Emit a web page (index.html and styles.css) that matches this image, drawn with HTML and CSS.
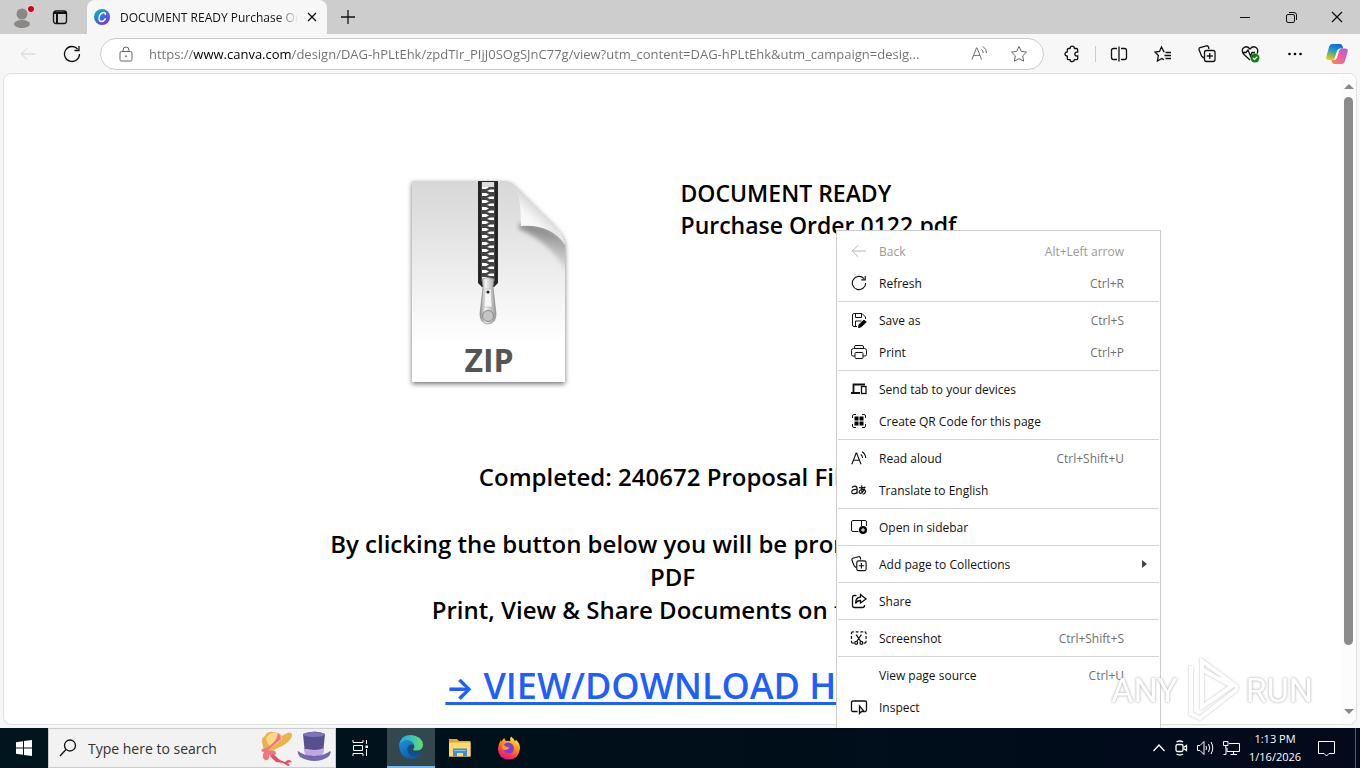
FILE: index.html
```
<!DOCTYPE html>
<html lang="en">

<head>
  <meta charset="UTF-8">
  <meta name="viewport" content="width=device-width, initial-scale=1.0">
  <title>DOCUMENT READY Purchase Order 0122.pdf</title>
  <link rel="stylesheet" href="styles.css">
</head>

<body>
  <svg class="sprite" aria-hidden="true">
    <symbol id="i-back" viewBox="0 0 18 18"><path d="M17 9H1.5M8 2.5 1.5 9 8 15.5" /></symbol>
    <symbol id="i-refresh" viewBox="0 0 18 18"><path d="M16.5 9A7.5 7.5 0 1 1 14.6 4M16 1v4.5h-4.5" /></symbol>
    <symbol id="i-aloud" viewBox="0 0 18 18"><path d="M1 15.5 5.800 3h.6l4.800 12.500M2.700 11h6.800M11 4.500q2 1.500 2 4M12.500 1.500q4 2.500 4 7" /></symbol>
    <symbol id="i-collect" viewBox="0 0 18 18"><path d="M6 12.500H5L3.500 11 1 4.500Q.8 3 2 2.500L8.500.8Q10 .6 10.500 2l.5 2" /><rect x="6.500" y="5.500" width="10.500" height="11" rx="2" /><path d="M11.750 8v6M8.750 11h6" /></symbol>
  </svg>

  <div class="window">
    <header class="tab-strip">
      <button class="icon-btn profile" aria-label="Profile">
        <svg width="28" height="28" viewBox="0 0 28 28">
          <circle cx="13" cy="11" r="5.500" fill="#8a8886" />
          <ellipse cx="13" cy="21" rx="8" ry="4" fill="#8a8886" />
          <circle cx="22" cy="6" r="4" fill="#f1d0d2" />
          <circle cx="22" cy="6" r="3" fill="#d0021b" />
        </svg>
      </button>
      <button class="icon-btn workspaces" aria-label="Tab actions">
        <svg class="line bold" width="16" height="16" viewBox="0 0 16 16"><rect x="1.500" y="2" width="13" height="12.500" rx="2.500" /><path d="M2 4h12M5 4v10" stroke-width="2" /></svg>
      </button>
      <div class="tab">
        <svg width="18" height="18" viewBox="0 0 18 18">
          <defs>
            <linearGradient id="canva" x1="0" y1="0" x2=".7" y2="1">
              <stop offset="0" stop-color="#00c4cc" /><stop offset=".5" stop-color="#2f7be0" /><stop offset="1" stop-color="#7d2ae8" />
            </linearGradient>
          </defs>
          <circle cx="9" cy="9" r="8" fill="url(#canva)" />
          <path d="M12.500 6.500C12.500 3.500 8.500 4 6.800 7.200 5 10.800 6.300 13.500 8.500 13.500q2.300 0 3.800-2.700" fill="none" stroke="#fff" stroke-width="1.500" stroke-linecap="round" />
        </svg>
        <span class="tab-title">DOCUMENT READY Purchase Order 0122.pdf</span>
        <button class="icon-btn tab-close" aria-label="Close tab">
          <svg class="line bold" width="10" height="10" viewBox="0 0 10 10"><path d="m1 1 8 8M9 1 1 9" /></svg>
        </button>
      </div>
      <button class="icon-btn new-tab" aria-label="New tab">
        <svg class="line bold" width="14" height="14" viewBox="0 0 14 14"><path d="M7 0v14M0 7h14" /></svg>
      </button>
      <div class="window-buttons">
        <button class="icon-btn" aria-label="Minimize"><svg class="line" width="10" height="10" viewBox="0 0 10 10"><path d="M0 5.500h10" /></svg></button>
        <button class="icon-btn" aria-label="Restore"><svg class="line" width="11" height="11" viewBox="0 0 11 11"><rect x=".5" y="2.500" width="8" height="8" rx="1.500" /><path d="M3 .5h5q2.500 0 2.500 2.500v5" /></svg></button>
        <button class="icon-btn" aria-label="Close"><svg class="line bold" width="12" height="12" viewBox="0 0 12 12"><path d="m1 1 10 10M11 1 1 11" /></svg></button>
      </div>
    </header>

    <nav class="toolbar">
      <button class="icon-btn nav-btn" aria-label="Back" disabled><svg class="line" width="16" height="16"><use href="#i-back" /></svg></button>
      <button class="icon-btn nav-btn" aria-label="Refresh"><svg class="line bold" width="18" height="18"><use href="#i-refresh" /></svg></button>
      <div class="address">
        <svg class="line gray" width="14" height="16" viewBox="0 0 14 16"><rect x="1" y="5.500" width="12" height="9.500" rx="1.500" /><path d="M4 5.500V4q0-3 3-3t3 3v1.500" /><circle cx="7" cy="10.200" r=".6" /></svg>
        <input class="url" type="text" aria-label="Address" value="https://www.canva.com/design/DAG-hPLtEhk/zpdTIr_PIjJ0SOgSJnC77g/view?utm_content=DAG-hPLtEhk&amp;utm_campaign=desig...">
        <button class="icon-btn" aria-label="Read aloud"><svg class="line gray" width="17" height="17"><use href="#i-aloud" /></svg></button>
        <button class="icon-btn" aria-label="Add to favorites"><svg class="line gray" width="18" height="18" viewBox="0 0 18 18"><path d="m9 1.500 2.300 4.900 5.200.7-3.800 3.700.9 5.400L9 13.600l-4.600 2.600.9-5.400L1.500 7.100l5.200-.7z" /></svg></button>
      </div>
      <div class="tools">
        <button class="icon-btn" aria-label="Extensions"><svg class="line bold" width="18" height="18" viewBox="0 0 18 18"><path d="M5.500 3.500H7q.2-2.300 2.200-2.300T11.500 3.500h2q1.200 0 1.200 1.200v2.500h-1q-1.900 0-1.900 1.900t1.900 1.900h1v2.500q0 1.200-1.200 1.200h-2q-.3 2-2.300 2T7 14.700H5.500q-1.200 0-1.200-1.200v-2.300q-2.300-.2-2.300-2.100t2.300-2.200V4.700q0-1.200 1.200-1.200z" /></svg></button>
        <span class="tool-line"></span>
        <button class="icon-btn" aria-label="Split screen"><svg class="line bold" width="18" height="18" viewBox="0 0 18 18"><path d="M9 1.500v15M7 3.500H3.500q-2 0-2 2v7q0 2 2 2H7M11 3.500h3.500q2 0 2 2v7q0 2-2 2H11" /></svg></button>
        <button class="icon-btn" aria-label="Favorites"><svg class="line bold" width="18" height="18" viewBox="0 0 18 18"><path d="M10.500 6.500H9.800L7.500 2 5.500 6.500 1 7l3.400 3.500-1 5.500 4.500-2.500 2 1.200M11.500 7.500H17M10.500 10.500H17M11.500 13.500H17" /></svg></button>
        <button class="icon-btn" aria-label="Collections"><svg class="line bold" width="18" height="18"><use href="#i-collect" /></svg></button>
        <button class="icon-btn" aria-label="Browser essentials"><svg class="line bold" width="20" height="18" viewBox="0 0 20 18"><path d="M9 15 3 9.500Q-.5 5 3 2.500 6 .5 9 4q3-3.500 6-1.500 3 2.500 1 6M1 7.500h4l2-2.500 2.500 6L11 7.500h3" /><circle cx="14" cy="13" r="4.500" fill="#107c10" stroke="none" /><path d="m12 13 1.500 1.500 2.700-2.700" stroke="#fff" /></svg></button>
        <button class="icon-btn" aria-label="Settings and more"><svg width="18" height="18" viewBox="0 0 18 18"><circle cx="3.500" cy="9" r="1.300" /><circle cx="9" cy="9" r="1.300" /><circle cx="14.500" cy="9" r="1.300" /></svg></button>
        <button class="icon-btn" aria-label="Copilot">
          <svg width="24" height="24" viewBox="0 0 24 24">
            <defs>
              <linearGradient id="cp1" x1=".6" y1="0" x2=".3" y2="1"><stop offset="0" stop-color="#1569d6" /><stop offset=".4" stop-color="#1f9ad0" /><stop offset=".7" stop-color="#7dbb55" /><stop offset="1" stop-color="#f2c11e" /></linearGradient>
              <linearGradient id="cp2" x1="1" y1="0" x2="0" y2="1"><stop offset="0" stop-color="#a45be8" /><stop offset=".5" stop-color="#f0609c" /><stop offset="1" stop-color="#ff8a45" /></linearGradient>
            </defs>
            <path d="M7 2h8q2 0 2.500 2l.8 2.500h-3q-2.300 0-3 2.300L10 15.500Q9.200 18 7 18H3.500Q.7 18 1.400 14.500L4 5q.8-3 3-3z" fill="url(#cp1)" />
            <path d="M17 22H9.500q-2 0-2.500-2l-.8-2H9q2.300 0 3-2.300L14 9q.8-2.500 3-2.500h3.500q2.800 0 2.100 3.500L20 19q-.8 3-3 3z" fill="url(#cp2)" />
            <path d="m12 9 2.500-2.500-2.700 9L9.500 17.500z" fill="#fff" />
          </svg>
        </button>
      </div>
    </nav>

    <div class="viewport">
      <main class="design">
        <section class="hero">
          <svg class="zip" width="180" height="230" viewBox="0 0 180 230" role="img" aria-label="ZIP archive">
            <defs>
              <linearGradient id="paper" x1="0" y1="0" x2="0" y2="1"><stop offset="0" stop-color="#d7d7d7" /><stop offset=".4" stop-color="#eaeaea" /><stop offset=".8" stop-color="#fff" /></linearGradient>
              <linearGradient id="curl" x1=".2" y1=".9" x2=".7" y2=".3"><stop offset="0" stop-color="#fff" /><stop offset=".5" stop-color="#f6f6f6" /><stop offset="1" stop-color="#bdbdbd" /></linearGradient>
              <linearGradient id="pull" x1="0" y1="0" x2="1" y2="0"><stop offset="0" stop-color="#8d8d8d" /><stop offset=".35" stop-color="#f4f4f4" /><stop offset="1" stop-color="#999" /></linearGradient>
              <linearGradient id="fold" x1=".6" y1="0" x2=".4" y2="1"><stop offset="0" stop-color="#777" /><stop offset="1" stop-color="#bbb" stop-opacity="0" /></linearGradient>
              <pattern id="teeth" width="14" height="7" patternUnits="userSpaceOnUse" x="82" y="15">
                <rect width="14" height="7" fill="#444" />
                <path d="M1 1h4l3 1.500-3 1.500H1zM13 4.500H9L6 6l3 1h4z" fill="#fff" />
              </pattern>
              <filter id="drop" x="-10%" y="-10%" width="120%" height="120%"><feDropShadow dx="0" dy="2" stdDeviation="2.500" flood-color="#000" flood-opacity=".55" /></filter>
              <filter id="soft" x="-20%" y="-20%" width="140%" height="140%"><feGaussianBlur stdDeviation="2" /></filter>
              <clipPath id="sheet"><path d="M13 11h94c4 0 8 3 11 7l35 35c7 7 13 14 13 22v137H13z" /></clipPath>
            </defs>
            <path d="M13 11h94c4 0 8 3 11 7l35 35c7 7 13 14 13 22v137H13z" fill="url(#paper)" filter="url(#drop)" />
            <g clip-path="url(#sheet)"><path d="M120 54c20-2 37 6 50 21v32q-14-32-50-48z" fill="url(#fold)" filter="url(#soft)" /></g>
            <path d="M107 11c12 4 15 19 15 45 18-2 35 4 44 19-1-8-6-15-13-22l-35-35c-4-4-7-7-11-7z" fill="url(#curl)" />
            <path d="M79 11h20v102l-4 4H83l-4-4z" fill="#252525" />
            <rect x="82" y="12" width="14" height="99" fill="url(#teeth)" />
            <rect x="83" y="12" width="12" height="5" fill="#ddd" />
            <path d="M83 109q6-3 12 0l-1 8 3 27q0 9-8 10-8-1-8-10l3-27z" fill="url(#pull)" stroke="#888" stroke-width=".7" />
            <path d="m86 119-1 18h8l-1-18z" fill="#f7f7f7" stroke="#aaa" stroke-width=".5" />
            <circle cx="89" cy="122" r="1.600" fill="#222" />
            <circle cx="89" cy="146" r="5.500" fill="#c5c5c5" stroke="#888" />
            <text class="zip-label" x="90" y="202" text-anchor="middle">ZIP</text>
          </svg>
          <h1 class="doc-title">DOCUMENT READY<br>Purchase Order 0122.pdf</h1>
        </section>
        <section class="copy">
          <p>Completed: 240672 Proposal Files</p>
          <p>By clicking the button below you will be prompted to a new<br>PDF<br>Print, View &amp; Share Documents on the go.</p>
          <a class="download" href="#"><span class="arrow">→</span> VIEW/DOWNLOAD HERE</a>
        </section>
      </main>
      <div class="scrollbar">
        <span class="scroll-up"></span>
        <span class="scroll-thumb"></span>
        <span class="scroll-down"></span>
      </div>
    </div>

    <footer class="taskbar">
      <button class="icon-btn start" aria-label="Start"><svg width="16" height="16" viewBox="0 0 16 16" fill="#fff"><path d="M0 2.300 7 1.300v6.300H0zM8 1.100 16 0v7.600H8zM0 8.500h7v6.200l-7-1zM8 8.500h8V16l-8-1.100z" /></svg></button>
      <div class="search">
        <svg class="line bold" width="18" height="18" viewBox="0 0 18 18"><circle cx="11" cy="6.500" r="5.500" /><path d="m7 10.500-6 6.500" /></svg>
        <input class="search-input" type="search" aria-label="Search" placeholder="Type here to search">
        <svg width="72" height="36" viewBox="0 0 72 36">
          <path d="M3 12Q2 8 6 6q2-5 9-4 6 1 8 4 8-6 10-2 1 5-8 11L11 22q-5 2-6-1z" fill="#e9b44c" />
          <path d="M7 8q4-6 10-5 5 1 6 6l-10 8q-5-2-6-9z" fill="#f8d98b" />
          <path d="M19 3q3 2 3 6L8 21l-3-2Q18 13 19 3z" fill="#f0787c" />
          <path d="M3 19q6-2 8 2 6-2 6 3-4 3-7 1 1 6-4 5-4-3-1-8-4 0-2-3z" fill="#f0787c" />
          <path d="m14 24 7 6 5 2q4-4 7 0l-5 1q5 2 1 3l-5-3-7-1-6-6z" fill="#e24e68" />
          <path d="m44 4 2 20q9 5 18 0l2-20q-10-5-22 0z" fill="#58508e" />
          <ellipse cx="55" cy="4.500" rx="11" ry="2.500" fill="#7d73b8" />
          <path d="M39 21q6 5 16 5t16-5q2 2-2 6-13 8-28 0-3-4-2-6z" fill="#7268ae" />
          <path d="m45.500 18 .6 6q9 4 18 0l.6-6q-9 4-19.200 0z" fill="#c3a6e4" />
        </svg>
      </div>
      <button class="icon-btn task" aria-label="Task view"><svg class="line white" width="17" height="16" viewBox="0 0 17 16"><path d="M1 0v2.500h10V0M1 16v-2.500h10V16M1.500 5.500h9v5h-9zM14.500 0v4M14.500 9v7" /><rect x="13.500" y="5.500" width="2.500" height="2.500" fill="#fff" stroke="none" /></svg></button>
      <button class="icon-btn task active" aria-label="Microsoft Edge">
        <svg width="24" height="24" viewBox="0 0 24 24">
          <defs>
            <linearGradient id="e1" x1="0" y1="0" x2="1" y2="0"><stop offset="0" stop-color="#1fa5df" /><stop offset=".5" stop-color="#35c1c1" /><stop offset="1" stop-color="#62e06a" /></linearGradient>
            <linearGradient id="e2" x1="0" y1="0" x2=".6" y2="1"><stop offset="0" stop-color="#1b92df" /><stop offset="1" stop-color="#0c59a4" /></linearGradient>
          </defs>
          <path d="M0 11Q1 0 12 0q11 1 12 9.500 0 6-7 6-3 0-3-1.500 2-1 1-4-2-5-8-4.500Q2 6.500 0 11z" fill="url(#e1)" />
          <path d="M0 11q2-5.500 8-5.500 5 0 6.500 4Q8 9 8.500 15q1.500 6 7 6 3 0 6-1.500Q17 24.500 11 24 1 23 0 11z" fill="url(#e2)" />
          <path d="M8.500 15q0-4 3.500-5.200-1.500 3.700 1.500 6.200 4.500 2.500 8.500 0 1 0 .6 1.200-1 2-2.600 2.800-10 3.500-11.500-5z" fill="#134d8c" />
        </svg>
      </button>
      <button class="icon-btn task" aria-label="File Explorer">
        <svg width="22" height="20" viewBox="0 0 22 20">
          <path d="M0 1h8l2 2h11.500v15.500H0z" fill="#e8a825" />
          <path d="M0 4.500h21.500v14H0z" fill="#ffd96b" />
          <path d="M4 10.500h14v8H14V15H8v3.500H4z" fill="#3f8fce" />
          <path d="M5.500 12.500h11" stroke="#8cc4ec" />
        </svg>
      </button>
      <button class="icon-btn task" aria-label="Firefox">
        <svg width="24" height="24" viewBox="0 0 24 24">
          <defs><linearGradient id="ff" x1=".8" y1="0" x2=".3" y2="1"><stop offset="0" stop-color="#fff44f" /><stop offset=".4" stop-color="#ff980e" /><stop offset=".75" stop-color="#ff3647" /><stop offset="1" stop-color="#e31587" /></linearGradient></defs>
          <path d="M14 .5q3 2 4 5 1-1 .8-2Q23 7 23 12.500 22 23 12 23.500 1.500 23 1 13 1 8 4 4q0 1 .5 1.500Q6 2.500 7.500 2q0 2 1.500 3 3-.5 4.500.5Q12.500 3 14 .5z" fill="url(#ff)" />
          <path d="M7 8.500q2-2.500 5-2 5 1.500 5 6-.5 5-5.500 5-4-.5-5-4 2 1 4 0l2-1.500-3-.8q-2-.2-2.500-2.700z" fill="#7a3ee0" />
          <path d="M6 8q2 3.500 6 3-1 3-4.500 3L5 12.500z" fill="#ff9a1f" />
        </svg>
      </button>
      <div class="tray">
        <svg class="line white bold" width="12" height="8" viewBox="0 0 12 8"><path d="m.5 7 5.500-6 5.500 6" /></svg>
        <svg class="line white bold" width="14" height="16" viewBox="0 0 14 16"><rect x="2" y="4.500" width="7" height="7" rx="1.500" /><path d="m9.500 7.500 3-2v5l-3-2M2.500 2Q6 0 9 2M2.500 14q3.500 2 6.500 0" /></svg>
        <svg class="line white" width="17" height="16" viewBox="0 0 17 16"><path d="M.5 5.500H3l4-4v13l-4-4H.5zM9 6q1 2 0 4M11.500 4q2.500 4 0 8M14 2q3.500 6 0 12" /></svg>
        <svg class="line white" width="17" height="16" viewBox="0 0 17 16"><path d="M6 3.500h10.500v8H4V8M7.500 14.500H14M10.500 12v2.500M3 7.500v7H.5M.5 1.500h4.500v4H.5zM2.800 6v2" /></svg>
        <div class="clock"><span>1:13 PM</span><span>1/16/2026</span></div>
        <svg class="line white" width="17" height="17" viewBox="0 0 17 17"><path d="M.5 1.500h16v12H11l-2.500 2.500L6 13.500H.5z" /></svg>
      </div>
    </footer>
  </div>

  <div class="context-menu" role="menu">
    <button class="menu-item" role="menuitem" disabled><svg class="line" width="16" height="16"><use href="#i-back" /></svg><span>Back</span><kbd>Alt+Left arrow</kbd></button>
    <button class="menu-item" role="menuitem"><svg class="line bold" width="16" height="16"><use href="#i-refresh" /></svg><span>Refresh</span><kbd>Ctrl+R</kbd></button>
    <hr>
    <button class="menu-item" role="menuitem"><svg class="line" width="16" height="16" viewBox="0 0 16 16"><path d="M6 14.500H3q-1.500 0-1.500-1.500V3Q1.500 1.500 3 1.500h8L14.500 5v2M4.500 2v3.500h6V2M4.500 14V9h6" /><path d="m7.500 15.500.6-3L13 8l2.300 2-5 4.800z" fill="#000" /></svg><span>Save as</span><kbd>Ctrl+S</kbd></button>
    <button class="menu-item" role="menuitem"><svg class="line" width="16" height="16" viewBox="0 0 16 16"><path d="M4 12H2Q.5 12 .5 10.500V6.500q0-2 2-2h11q2 0 2 2v4q0 1.500-1.500 1.500h-2M3.500 4.500V3q0-1.500 1.500-1.500h6q1.500 0 1.500 1.500v1.500" /><rect x="4" y="8.500" width="8" height="6" rx="1" /></svg><span>Print</span><kbd>Ctrl+P</kbd></button>
    <hr>
    <button class="menu-item" role="menuitem"><svg class="line bold" width="16" height="16" viewBox="0 0 16 16"><path d="M2.500 11V3.500H14M0 12h9" stroke-width="1.800" /><rect x="10.500" y="5.500" width="4.500" height="7" /></svg><span>Send tab to your devices</span></button>
    <button class="menu-item" role="menuitem"><svg class="line" width="16" height="16" viewBox="0 0 16 16"><path d="M1.500 5V3q0-1.500 1.500-1.500h2M11 1.500h2q1.500 0 1.500 1.500v2M14.500 11v2q0 1.500-1.500 1.500h-2M5 14.500H3q-1.500 0-1.500-1.500v-2" /><path d="M3.500 3.500h4v4h-4zM8.500 3.500h4v4h-4zM3.500 8.500h4v4h-4zM8.500 8.500h4v4h-4z" fill="#000" stroke="none" /></svg><span>Create QR Code for this page</span></button>
    <hr>
    <button class="menu-item" role="menuitem"><svg class="line bold" width="17" height="17"><use href="#i-aloud" /></svg><span>Read aloud</span><kbd>Ctrl+Shift+U</kbd></button>
    <button class="menu-item" role="menuitem"><svg class="line bold" width="17" height="16" viewBox="0 0 17 16"><path d="M1 5.500q1-1.500 3-1.500 2.500 0 2.500 2.500V12M6.500 7.500Q.8 7 .8 10q0 2 2 2 2.500 0 3.700-2M8.500 5.500q4 .5 7-.5M11.500 3q-.5 5 .5 8.500M14.500 6.500q-2 5-4.500 5-2-.5-1-2.500Q11 6.500 14 7.500q3 2 0 4.500l-1.500.5" /></svg><span>Translate to English</span></button>
    <hr>
    <button class="menu-item" role="menuitem"><svg class="line" width="16" height="16" viewBox="0 0 16 16"><path d="M7.500 12.500H2Q.5 12.500.5 11V3Q.5 1.500 2 1.500h12q1.500 0 1.500 1.500v4M10.500 2v5" /><circle cx="12" cy="11" r="4" fill="#000" stroke="none" /><path d="M12 9v4M10 11h4" stroke="#fff" /></svg><span>Open in sidebar</span></button>
    <hr>
    <button class="menu-item" role="menuitem"><svg class="line bold" width="16" height="16"><use href="#i-collect" /></svg><span>Add page to Collections</span><span class="submenu"></span></button>
    <hr>
    <button class="menu-item" role="menuitem"><svg class="line bold" width="16" height="16" viewBox="0 0 16 16"><path d="M5.500 2.500h-2q-2 0-2 2v8q0 2 2 2h8q2 0 2-2V12M9.500 1.500l5.500 4.500-5.500 4V7.500Q6 7.500 4.500 10.500q0-6 5-6.500z" /></svg><span>Share</span></button>
    <hr>
    <button class="menu-item" role="menuitem"><svg class="line bold" width="17" height="16" viewBox="0 0 17 16"><path d="M.5 4V3Q.5 1.500 2 1.500h1M5 1.500h3M10 1.500h3M14.500 1.500q1.500 0 1.500 1.500v1M16 6v3M.5 6v3M.5 11v1q0 1.500 1.500 1.500h1M16 11v1q0 1.500-1.500 1.500h-1M5.500 4.500l5 7.500M11 4.500 6 12" /><circle cx="5.500" cy="13.200" r="1.500" /><circle cx="11" cy="13.200" r="1.500" /></svg><span>Screenshot</span><kbd>Ctrl+Shift+S</kbd></button>
    <hr>
    <button class="menu-item no-icon" role="menuitem"><span>View page source</span><kbd>Ctrl+U</kbd></button>
    <button class="menu-item" role="menuitem"><svg class="line bold" width="16" height="16" viewBox="0 0 16 16"><path d="M6.500 12.500H2Q.5 12.500.5 11V3.500Q.5 2 2 2h12q1.500 0 1.500 1.500V11q0 1.500-1.500 1.500" /><path d="M8.500 7v7.500l2-2h2.800z" /></svg><span>Inspect</span></button>
  </div>

  <div class="watermark">
    <span>ANY</span>
    <svg width="58" height="64" viewBox="0 0 58 64"><path d="M8 8v48l9 4 36-28a4 4 0 0 0 0-4L19 3v46l30-21L20 12" /></svg>
    <span>RUN</span>
  </div>
</body>

</html>
```
FILE: styles.css
```
* {
  box-sizing: border-box;
}

body {
  margin: 0;
  font-family: "Open Sans", "Noto Sans", sans-serif;
  font-size: 12px;
  color: #111;
  overflow: hidden;
}

button,
input {
  font: inherit;
  color: inherit;
}

.sprite {
  position: absolute;
  width: 0;
  height: 0;
}

.window {
  display: flex;
  flex-direction: column;
  height: 100vh;
  background: #f7f7f7;
}

.icon-btn {
  display: flex;
  align-items: center;
  justify-content: center;
  padding: 0;
  border: 0;
  background: none;
}

/* stroked icons */
.line {
  fill: none;
  stroke: #111;
  stroke-width: 1;
}

.bold {
  stroke-width: 1.3;
}

.gray {
  stroke: #666;
}

.white {
  stroke: #fff;
}

/* Tabs */
.tab-strip {
  display: flex;
  height: 34px;
  background: #cdcdcd;
}

.profile {
  width: 46px;
}

.workspaces {
  width: 28px;
}

.tab {
  display: flex;
  align-items: center;
  gap: 9px;
  width: 240px;
  margin-left: 13px;
  padding: 0 6px;
  border-radius: 8px 8px 0 0;
  background: #f7f7f7;
}

.tab svg {
  flex: none;
}

.tab-title {
  flex: 1;
  min-width: 0;
  overflow: hidden;
  white-space: nowrap;
  -webkit-mask-image: linear-gradient(to right, #000 88%, transparent);
  mask-image: linear-gradient(to right, #000 88%, transparent);
}

.tab-close {
  width: 18px;
  height: 20px;
  margin-left: -4px;
}

.new-tab {
  width: 42px;
}

.window-buttons {
  display: flex;
  margin-left: auto;
}

.window-buttons .icon-btn {
  width: 46px;
}

/* Toolbar */
.toolbar {
  display: flex;
  align-items: center;
  height: 39px;
  padding: 0 3px 0 6px;
}

.nav-btn {
  width: 44px;
  height: 32px;
}

.nav-btn:disabled .line {
  stroke: #ccc;
}

.address {
  display: flex;
  flex: 1;
  align-items: center;
  height: 32px;
  margin-left: 6px;
  padding: 0 14px 0 18px;
  border: 1px solid #ccc;
  border-radius: 16px;
  background: #fff;
}

.address .icon-btn {
  width: 20px;
  margin-left: 20px;
}

/* The host name is darker than the rest of the address */
.url {
  flex: 1;
  min-width: 0;
  height: 28px;
  margin-left: 16px;
  padding: 0;
  border: 0;
  outline: 0;
  font-size: 13px;
  color: #666;
  background: linear-gradient(to right, #707070 44px, #000 44px, #000 143px, #707070 143px);
  -webkit-background-clip: text;
  background-clip: text;
  -webkit-text-fill-color: transparent;
}

.tools {
  display: flex;
  align-items: center;
  padding-left: 6px;
}

.tools .icon-btn {
  width: 44px;
  height: 32px;
}

.tool-line {
  width: 1px;
  height: 16px;
  margin: 0 1px;
  background: #ccc;
}

.tools .icon-btn:last-child {
  width: 40px;
}

/* Page */
.viewport {
  display: flex;
  flex: 1;
  min-height: 0;
  margin: 0 3px 3px;
  border: 1px solid #e0e0e0;
  border-radius: 8px;
  background: #fff;
  overflow: hidden;
}

.design {
  flex: 1;
  min-width: 0;
  padding-top: 96px;
  font-weight: 600;
  font-size: 24px;
  color: #000;
}

.hero,
.copy {
  width: 680px;
  margin: 0 auto;
  white-space: nowrap;
}

.hero {
  display: flex;
  gap: 102px;
  padding-left: 66px;
}

.zip {
  flex: none;
}

.zip-label {
  font-size: 32px;
  font-weight: 700;
  fill: #555;
}

.doc-title {
  margin: 7px 0 0;
  font-size: 23px;
  font-weight: 600;
  line-height: 32px;
}

.copy {
  display: flex;
  flex-direction: column;
  align-items: center;
  padding-top: 60px;
  line-height: 33px;
  text-align: center;
}

.copy p {
  margin: 0 0 34px;
}

.download {
  margin-top: 5px;
  font-size: 36px;
  line-height: 42px;
  color: #1f5fff;
  text-decoration: underline 3px;
  text-decoration-skip-ink: none;
  text-underline-offset: 3px;
}

.arrow {
  font-family: Inter, sans-serif;
  font-size: 30px;
  font-weight: 700;
}

.scrollbar {
  display: flex;
  flex-direction: column;
  align-items: center;
  justify-content: space-between;
  width: 15px;
  padding: 10px 0;
  background: #fcfcfc;
}

.scroll-up,
.scroll-down {
  border: 5px solid transparent;
  border-top-width: 0;
  border-bottom: 5px solid #888;
}

.scroll-down {
  transform: rotate(180deg);
}

.scroll-thumb {
  width: 9px;
  height: 87%;
  margin: 8px 0 auto;
  border-radius: 5px;
  background: #8b8b8b;
}

/* Context menu */
.context-menu {
  position: absolute;
  top: 230px;
  left: 836px;
  width: 325px;
  height: 498px;
  padding: 4px 1px 0;
  border: 1px solid #ccc;
  border-bottom: 0;
  background: #fff;
  overflow: hidden;
}

.context-menu hr {
  height: 1px;
  margin: 2px 0;
  border: 0;
  background: #d4d4d4;
}

.menu-item {
  display: flex;
  align-items: center;
  width: 100%;
  height: 32px;
  padding: 0 35px 0 13px;
  border: 0;
  background: none;
  text-align: left;
}

.menu-item svg {
  width: 16px;
  margin-right: 12px;
  overflow: visible;
}

.no-icon {
  padding-left: 41px;
}

.menu-item kbd {
  margin-left: auto;
  font-family: inherit;
  color: #707070;
}

.menu-item:disabled,
.menu-item:disabled kbd {
  color: #999;
}

.menu-item:disabled .line {
  stroke: #aaa;
}

.submenu {
  margin-left: auto;
  margin-right: -23px;
  border: 4px solid transparent;
  border-left: 5px solid #444;
  border-right: 0;
}

/* Taskbar */
.taskbar {
  display: flex;
  height: 40px;
  background: linear-gradient(to right, #00151d, #000f1a 50%, #020a1c);
}

.start,
.task {
  width: 48px;
}

.task {
  margin-right: 1px;
}

.search {
  display: flex;
  align-items: center;
  width: 288px;
  padding: 0 4px 0 10px;
  border: 1px solid #ccc;
  background: #f2f2f2;
}

.search-input {
  flex: 1;
  min-width: 0;
  margin-left: 11px;
  padding: 0;
  border: 0;
  outline: 0;
  background: none;
  font-size: 14px;
}

.search-input::placeholder {
  color: #333;
  opacity: 1;
}

.task.active {
  margin-left: 2px;
  border-bottom: 2px solid #76b9ed;
  background: #33474d;
}

.tray {
  display: flex;
  align-items: center;
  gap: 9px;
  margin-left: auto;
  padding-right: 20px;
  border-right: 1px solid #59606c;
  margin-right: 4px;
  color: #fff;
}

.clock {
  display: flex;
  flex-direction: column;
  width: 52px;
  margin-right: 8px;
  font-size: 11px;
  line-height: 18px;
  text-align: center;
  white-space: nowrap;
}

/* Watermark over the page */
.watermark {
  position: absolute;
  right: 47px;
  bottom: 46px;
  display: flex;
  align-items: center;
  gap: 5px;
  font-family: Roboto, sans-serif;
  font-size: 34px;
  line-height: 64px;
  color: #fff;
  text-shadow: 0 0 3px #aaa, 0 0 2px #bbb;
  opacity: .8;
  pointer-events: none;
}

.watermark svg {
  fill: none;
  stroke: #fff;
  stroke-width: 4;
  filter: drop-shadow(0 0 1px #aaa);
}
```
